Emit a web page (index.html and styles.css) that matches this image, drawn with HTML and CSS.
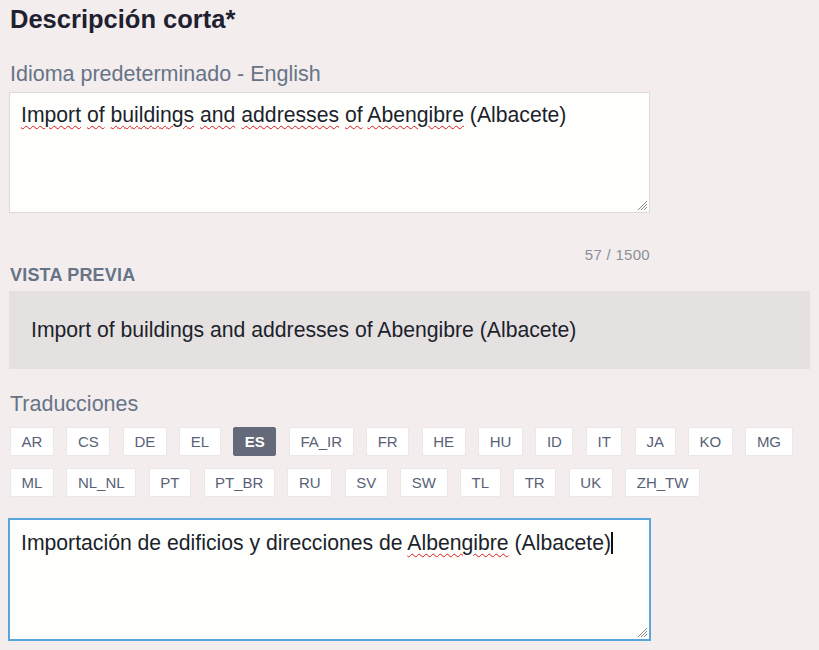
FILE: index.html
```html
<!DOCTYPE html>
<html lang="es">
<head>
<meta charset="utf-8">
<link rel="stylesheet" href="styles.css">
</head>
<body>
<main class="page">
  <h2 class="title">Descripción corta*</h2>
  <div class="label">Idioma predeterminado - English</div>
  <div class="field">
    <div class="field-text"><span class="sp">Import</span> <span class="sp">of</span> <span class="sp">buildings</span> <span class="sp">and</span> <span class="sp">addresses</span> <span class="sp">of</span> <span class="sp">Abengibre</span> (Albacete)</div>
    <span class="grip"></span>
  </div>
  <div class="counter">57 / 1500</div>
  <div class="preview-label">VISTA PREVIA</div>
  <div class="preview">Import of buildings and addresses of Abengibre (Albacete)</div>
  <div class="label trans-label">Traducciones</div>
  <div class="chips">
    <span class="chip">AR</span><span class="chip">CS</span><span class="chip">DE</span><span class="chip">EL</span><span class="chip active">ES</span><span class="chip">FA_IR</span><span class="chip">FR</span><span class="chip">HE</span><span class="chip">HU</span><span class="chip">ID</span><span class="chip">IT</span><span class="chip">JA</span><span class="chip">KO</span><span class="chip">MG</span>
    <span class="chip">ML</span><span class="chip">NL_NL</span><span class="chip">PT</span><span class="chip">PT_BR</span><span class="chip">RU</span><span class="chip">SV</span><span class="chip">SW</span><span class="chip">TL</span><span class="chip">TR</span><span class="chip">UK</span><span class="chip">ZH_TW</span>
  </div>
  <div class="field focus">
    <div class="field-text">Importación de edificios y direcciones de <span class="sp">Albengibre</span> (Albacete)<span class="caret"></span></div>
    <span class="grip"></span>
  </div>
</main>
</body>
</html>
```
FILE: styles.css
```css
html, body {
  margin: 0;
  padding: 0;
  background: #f3eded;
}
body {
  font-family: "Liberation Sans", Arial, sans-serif;
  color: #1f2130;
}
.page {
  width: 801px;
  padding: 0 0 0 9px;
}
.title {
  margin: 0;
  padding: 4px 0 0 1px;
  font-size: 25.5px;
  line-height: 30px;
  font-weight: 700;
  color: #1f2130;
}
.label {
  margin-top: 27px;
  padding-left: 1px;
  font-size: 21.5px;
  line-height: 26px;
  color: #677487;
}
.field {
  position: relative;
  box-sizing: border-box;
  width: 641px;
  height: 121px;
  margin-top: 5px;
  background: #fefffd;
  border: 1px solid #dedada;
  padding: 9px 11px;
}
.field-text {
  font-size: 21.2px;
  line-height: 26px;
  color: #1c1f2c;
}
.sp {
  text-decoration: underline wavy #e0161b;
  text-decoration-thickness: 1px;
  text-underline-offset: 3px;
}
.grip {
  position: absolute;
  right: 2px;
  bottom: 2px;
  width: 9px;
  height: 9px;
  background: linear-gradient(135deg, transparent 0 45%, #8a8a8a 45% 52%, transparent 52% 62%, #8a8a8a 62% 69%, transparent 69% 79%, #8a8a8a 79% 86%, transparent 86%);
}
.counter {
  width: 641px;
  margin-top: 33px;
  text-align: right;
  font-size: 15px;
  line-height: 18px;
  letter-spacing: 0.3px;
  color: #8b8f98;
}
.preview-label {
  margin-top: 1px;
  padding-left: 1px;
  font-size: 18px;
  line-height: 20px;
  letter-spacing: 0.2px;
  font-weight: 700;
  color: #677487;
}
.preview {
  margin-top: 6px;
  height: 78px;
  box-sizing: border-box;
  background: #e5e1e0;
  padding: 26px 22px;
  font-size: 21.2px;
  line-height: 26px;
  color: #1c1f2c;
}
.trans-label {
  margin-top: 22px;
}
.chips {
  display: flex;
  flex-wrap: wrap;
  column-gap: 12.6px;
  row-gap: 12px;
  width: 800px;
  margin-top: 10px;
  padding-left: 1px;
}
.chip {
  box-sizing: border-box;
  height: 29px;
  padding: 0 10.5px;
  background: #fff;
  border: 1px solid #ebe7e7;
  border-radius: 2px;
  font-size: 15px;
  line-height: 27px;
  color: #586277;
}
.chip.active {
  background: #646a7a;
  border-color: #646a7a;
  color: #fff;
  font-weight: 700;
}
.field.focus {
  margin-top: 21px;
  margin-left: -1px;
  width: 643px;
  height: 123px;
  border: 2px solid #5aa5dc;
  padding: 10px 11px;
}
.caret {
  display: inline-block;
  width: 2px;
  height: 22px;
  background: #111;
  vertical-align: -4px;
}
```
